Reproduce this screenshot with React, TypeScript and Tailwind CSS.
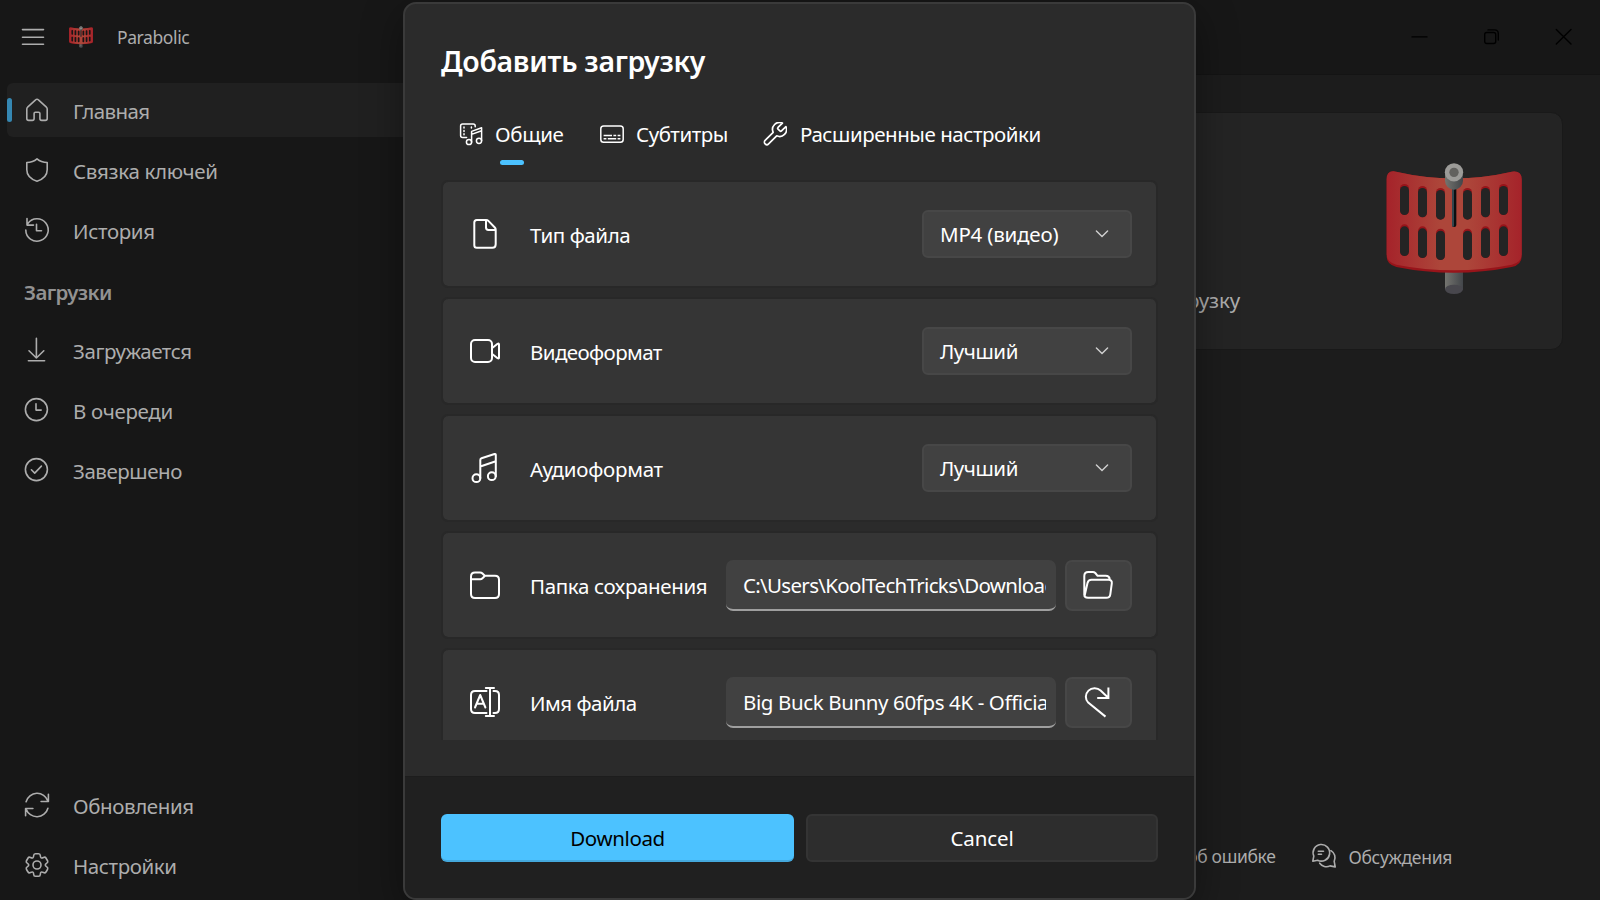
import type { ReactNode } from "react";

type IconProps = { children: ReactNode; className?: string; box?: number; stroke?: number };

function Icon({ children, className = "", box = 24, stroke = 1.6 }: IconProps) {
  return (
    <svg
      width={box}
      height={box}
      viewBox={`0 0 ${box} ${box}`}
      fill="none"
      stroke="currentColor"
      strokeWidth={stroke}
      strokeLinejoin="round"
      strokeLinecap="round"
      className={`block shrink-0 overflow-visible ${className}`}
    >
      {children}
    </svg>
  );
}

/* Six-toothed cog whose corners are smoothed with quadratic curves. */
const gearPath = (() => {
  const pts: [number, number][] = [];
  for (let i = 0; i < 6; i++) {
    for (const [da, r] of [[-24, 8.3], [-16, 11.7], [0, 11.3], [16, 11.7], [24, 8.3]]) {
      const a = ((i * 60 + da - 90) * Math.PI) / 180;
      pts.push([12 + r * Math.cos(a), 12 + r * Math.sin(a)]);
    }
  }
  const mid = (p: number[], q: number[]) => `${((p[0] + q[0]) / 2).toFixed(2)} ${((p[1] + q[1]) / 2).toFixed(2)}`;
  let d = `M${mid(pts[pts.length - 1], pts[0])}`;
  pts.forEach((p, i) => {
    d += `Q${p[0].toFixed(2)} ${p[1].toFixed(2)} ${mid(p, pts[(i + 1) % pts.length])}`;
  });
  return d + "Z";
})();

const slots = [
  [90, 102, 195], [144, 108, 202], [198, 114, 209], [279, 114, 209], [333, 108, 202], [387, 102, 195],
  [90, 223, 318], [144, 229, 324], [198, 236, 330], [279, 236, 330], [333, 229, 324], [387, 223, 318],
];

function Logo({ width, height, hole, id }: { width: number; height: number; hole: string; id: string }) {
  return (
    <svg width={width} height={height} viewBox="48 36 408 399" preserveAspectRatio="none" className="block shrink-0">
      <defs>
        <linearGradient id={`${id}-panel`} x1="0" x2="1" y1="0" y2="0">
          <stop offset="0" stopColor="#a5232a" />
          <stop offset="0.4" stopColor="#ad463a" />
          <stop offset="0.6" stopColor="#ad463a" />
          <stop offset="1" stopColor="#a5232a" />
        </linearGradient>
        <linearGradient id={`${id}-pole`} x1="0" x2="1" y1="0" y2="0">
          <stop offset="0" stopColor="#74746f" />
          <stop offset="1" stopColor="#43464a" />
        </linearGradient>
      </defs>
      <rect x="225" y="355" width="54" height="63" fill={`url(#${id}-pole)`} />
      <ellipse cx="252" cy="418" rx="27" ry="14" fill="#48474d" />
      <path d="M50 88Q50 64 70 64Q74 64 78 65Q252 105 426 65Q455 61 455 88V320Q455 344 425 351Q252 386 79 351Q50 342 50 320Z" fill="#98141a" />
      <path d="M50 88Q50 64 70 64Q74 64 78 65Q252 105 426 65Q455 61 455 88V312Q455 337 425 344Q252 378 79 344Q50 336 50 312Z" fill={`url(#${id}-panel)`} />
      {slots.map(([x, top, bottom]) => (
        <g key={`${x}-${top}`}>
          <rect x={x} y={top} width="27" height={bottom - top} rx="13.5" fill="#98141a" />
          <rect x={x} y={top + 6} width="27" height={bottom - top - 6} rx="13.5" fill={hole} />
        </g>
      ))}
      <rect x="246" y="100" width="13" height="131" rx="6" fill="#0b0f12" />
      <rect x="246" y="100" width="6" height="130" rx="3" fill="#33454d" />
      <path d="M225 67V92A27 27 0 0 0 279 92V67Z" fill={`url(#${id}-pole)`} />
      <circle cx="252" cy="67" r="27.5" fill="#9c9b98" />
      <circle cx="252" cy="67" r="14" fill="#62615e" />
    </svg>
  );
}

function NavItem({ icon, label, tracking, selected }: { icon: ReactNode; label: string; tracking: string; selected?: boolean }) {
  return (
    <div className={`relative flex h-[54px] items-center rounded-md pl-[18px] ${selected ? "bg-[#202020]" : ""}`}>
      {selected && <span className="absolute top-[15px] left-0 h-6 w-[5px] rounded-full bg-[#3587b2]" />}
      {icon}
      <span className={`ml-6 pt-0.5 text-[20.5px] leading-7 ${tracking}`}>{label}</span>
    </div>
  );
}

function SettingCard({ icon, label, tracking, children }: { icon: ReactNode; label: string; tracking: string; children: ReactNode }) {
  return (
    <div className="flex h-[108px] shrink-0 items-center rounded-[7px] border-2 border-[#282828] bg-[#353535] bg-clip-padding pr-6 pl-[27px]">
      {icon}
      <span className={`ml-[30px] pt-0.5 text-[20.5px] leading-7 whitespace-nowrap ${tracking}`}>{label}</span>
      <div className="ml-auto flex items-center gap-[9px]">{children}</div>
    </div>
  );
}

function Combo({ value, tracking }: { value: string; tracking: string }) {
  return (
    <div className="flex h-12 w-[210px] items-center justify-between rounded-md border-2 border-[#474747] bg-[#414141] pr-[22px] pl-4">
      <span className={`text-[20.5px] leading-7 ${tracking}`}>{value}</span>
      <svg width="12" height="8" viewBox="0 0 12 8" fill="none" stroke="#d0d0d0" strokeWidth="1.4" strokeLinecap="round" className="overflow-visible">
        <path d="M.4 1 6 6.6 11.6 1" />
      </svg>
    </div>
  );
}

function PathField({ value, tracking }: { value: string; tracking: string }) {
  return (
    <div className="h-[51px] w-[330px] overflow-hidden rounded-[7px] border-b-2 border-[#9f9f9f] bg-[#414141] pr-2.5 pl-[17px]">
      <div className={`h-full overflow-hidden text-[20.5px] leading-[50px] whitespace-nowrap ${tracking}`}>{value}</div>
    </div>
  );
}

function IconButton({ children }: { children: ReactNode }) {
  return (
    <div className="flex h-[51px] w-[67px] items-center justify-center rounded-[7px] border-2 border-[#474747] bg-[#414141] pr-px">{children}</div>
  );
}

export default function App() {
  return (
    <div className="relative flex h-[900px] w-[1600px] overflow-hidden bg-[#171717] font-['Noto_Sans',sans-serif] text-[#adadad]">
      <aside className="flex h-full w-[480px] flex-col pb-2">
        <header className="flex h-[74px] items-center pl-[21px]">
          <Icon stroke={1.6}>
            <path d="M1.5 4.6h21M1.5 12.2h21M1.5 19.2h21" />
          </Icon>
          <div className="mb-px ml-6">
            <Logo width={24} height={22} hole="#171717" id="mini" />
          </div>
          <span className="ml-6 text-[17.5px] leading-6 tracking-[-0.4px]">Parabolic</span>
        </header>
        <nav className="mt-[9px] flex flex-1 flex-col gap-1.5 pl-[7px]">
          <NavItem
            selected
            label="Главная"
            tracking="tracking-[-0.6px]"
            icon={
              <Icon>
                <path d="M12 1.2c-.6 0-1 .2-1.4.6L2.6 9.2c-.5.5-.8 1-.8 1.7v9.6c0 1.2.8 1.9 1.9 1.9h3.6c1.1 0 1.8-.8 1.8-1.8v-5c0-.9.5-1.3 1.3-1.3h3.2c.8 0 1.3.4 1.3 1.3v5c0 1 .7 1.8 1.8 1.8h3.6c1.1 0 1.9-.7 1.9-1.9v-9.6c0-.7-.3-1.2-.8-1.7l-8-7.4c-.4-.4-.8-.6-1.4-.6z" />
              </Icon>
            }
          />
          <NavItem
            label="Связка ключей"
            tracking="tracking-[-0.32px]"
            icon={
              <Icon>
                <path d="M12 .8c3 2.6 6.3 3.6 10.2 3.7v7.2c0 5.3-3.6 9.3-10.2 11.5C5.4 21 1.8 17 1.8 11.7V4.5C5.7 4.4 9 3.4 12 .8z" />
              </Icon>
            }
          />
          <NavItem
            label="История"
            tracking="tracking-[-0.35px]"
            icon={
              <Icon>
                <path d="M.8 12a11.2 11.2 0 1 0 2-6.4M2 .6v6.5h6.5M11.5 6.3v6.4h5" />
              </Icon>
            }
          />
          <div className="flex h-[54px] items-center pt-1 pl-[17px] text-[20.5px] leading-7 font-semibold tracking-[-0.6px] text-[#929292]">Загрузки</div>
          <NavItem
            label="Загружается"
            tracking="tracking-[-0.41px]"
            icon={
              <Icon>
                <path d="M11.4 .4v19.6M4 12.8l7.4 7.2 7.4-7.2M3.4 22.8h16.2" />
              </Icon>
            }
          />
          <NavItem
            label="В очереди"
            tracking="tracking-[-0.32px]"
            icon={
              <Icon>
                <circle cx="11.4" cy="11.6" r="11" />
                <path d="M11 5.7v6.4h5.2" />
              </Icon>
            }
          />
          <NavItem
            label="Завершено"
            tracking="tracking-[-0.45px]"
            icon={
              <Icon>
                <circle cx="11.4" cy="11.6" r="11" />
                <path d="m6.4 11.8 3.3 3.3 6.7-7" />
              </Icon>
            }
          />
        </nav>
        <div className="flex flex-col gap-1.5 pl-[7px]">
          <NavItem
            label="Обновления"
            tracking="tracking-[-0.4px]"
            icon={
              <Icon>
                <path d="M1.1 8.8A11.4 11.4 0 0 1 22.9 8M23.4 1.2v7.3h-7.3M22.9 15.2A11.4 11.4 0 0 1 1.1 16M.6 22.8v-7.3h7.3" />
              </Icon>
            }
          />
          <NavItem
            label="Настройки"
            tracking="tracking-[-0.4px]"
            icon={
              <Icon>
                <path d={gearPath} />
                <circle cx="12" cy="12" r="4" />
              </Icon>
            }
          />
        </div>
      </aside>

      <div className="flex flex-1 flex-col">
        <header className="flex h-[74px] shrink-0 items-center justify-end gap-[57px] pr-[29px] pb-0.5 text-black">
          <Icon box={15} stroke={1.4}>
            <path d="M0 7.9h15" />
          </Icon>
          <Icon box={15} stroke={1.4}>
            <rect x=".7" y="3.5" width="11" height="11" rx="2" />
            <path d="M4 .9h6.500c2.400 0 3.800 1.500 3.800 3.800V11" />
          </Icon>
          <Icon box={15} stroke={1.4}>
            <path d="M.3.4l14.700 14.700M15 .4.3 15.100" />
          </Icon>
        </header>
        <main className="flex flex-1 flex-col border-t border-[#141414] bg-[#1c1c1c] pt-[37px] pr-[37px]">
          <section className="flex h-[238px] justify-between rounded-xl border border-[#191919] bg-[#242424] pr-10">
            <div className="flex w-[759px] items-end justify-end pb-[35px] text-[20.5px] leading-7 tracking-[-0.1px] whitespace-nowrap">
              <span>Добавить загрузку</span>
            </div>
            <div className="pt-[49px]">
              <Logo width={136} height={133} hole="#242424" id="hero" />
            </div>
          </section>
          <footer className="mt-auto flex items-center gap-[37px] pr-[111px] pb-[31px] text-[17.5px] leading-6 whitespace-nowrap">
            <span className="ml-auto tracking-[-0.35px]">Сообщить об ошибке</span>
            <span className="flex items-center">
              <Icon stroke={1.6}>
                <path d="M.8 17.2l1-5A8.3 8.3 0 1 1 5.6 16.2zM6.3 7.2h5.2M6.3 10.3h3.2M19 6.6a8.3 8.3 0 0 1 3.2 10.7l1 5.6-5.2-1a8.3 8.3 0 0 1-10.3-2.7" />
              </Icon>
              <span className="ml-3 pt-0.5 tracking-[-0.3px]">Обсуждения</span>
            </span>
          </footer>
        </main>
      </div>

      <div
        role="dialog"
        className="absolute top-[2px] left-[403px] flex h-[898px] w-[793px] flex-col overflow-hidden rounded-[13px] border-2 border-[#3a3a3a] bg-[#2b2b2b] text-white shadow-[0_12px_40px_rgba(0,0,0,0.38)]"
      >
        <div className="flex h-[772px] flex-col px-9">
          <h2 className="mt-[37px] text-[28.5px] leading-10 font-semibold tracking-[-0.31px]">Добавить загрузку</h2>
          <div className="relative mt-[33px] ml-[18px] flex h-[51px] items-start text-[20.5px] leading-7">
            <div className="flex w-[141px] items-start pt-1.5">
              <Icon stroke={1.5} className="mt-0.5">
                <path d="M7.600 15.600H3.600q-2 0-2-2V4q0-2 2-2h10.600q2 0 2 2v.8M12.600 20.200V9.400l10-3.600v13M12.600 12.400l10-3.600" />
                <circle cx="10" cy="20" r="2.600" />
                <circle cx="20" cy="18.800" r="2.600" />
                <path d="M5 5v1M5 8.400v1M5 11.800v1M12.400 5v1" />
              </Icon>
              <span className="ml-3 tracking-[-0.35px]">Общие</span>
            </div>
            <div className="flex items-start pt-1.5">
              <Icon stroke={1.5} className="mt-0.5">
                <rect x=".8" y="4" width="22.400" height="16.200" rx="2.800" />
                <path strokeLinecap="butt" d="M3.600 13.600h8.400M13.400 13.600h2.800M17.600 13.600h2.800M3.600 16.800h2.800M7.800 16.800h8.400M17.600 16.800h2.800" />
              </Icon>
              <span className="ml-3 tracking-[-0.43px]">Субтитры</span>
            </div>
            <div className="ml-[35px] flex items-start pt-1.5">
              <svg width="24" height="24" viewBox="1.8 1.6 20.6 20.6" fill="none" stroke="currentColor" strokeWidth="1.45" strokeLinejoin="round" className="mt-0.5 block shrink-0">
                <path d="M14.7 6.3a1 1 0 0 0 0 1.4l1.6 1.6a1 1 0 0 0 1.4 0l3.77-3.77a6 6 0 0 1-7.94 7.94l-6.91 6.91a2.12 2.12 0 0 1-3-3l6.91-6.91a6 6 0 0 1 7.94-7.94l-3.76 3.76z" />
              </svg>
              <span className="ml-[13px] tracking-[-0.45px]">Расширенные настройки</span>
            </div>
            <span className="absolute bottom-0 left-[41px] h-[5px] w-6 rounded-full bg-[#4cc2ff]" />
          </div>
          <div className="mt-[15px] flex h-[560px] flex-col gap-[9px] overflow-hidden">
            <SettingCard
              label="Тип файла"
              tracking="tracking-[-0.4px]"
              icon={
                <Icon box={30} stroke={2}>
                  <path d="M6.800 1h9.400c.9 0 1.600.3 2.200.9l6.400 6.600c.6.6.9 1.300.9 2.200v14.600c0 2.100-1.200 3.500-3.300 3.500H6.800c-1.700 0-2.500-1-2.500-2.600V3.600C4.300 2 5.100 1 6.800 1zM16 1.300v7.200c0 1.600.8 2.400 2.400 2.400h7" />
                </Icon>
              }
            >
              <Combo value="MP4 (видео)" tracking="tracking-[-0.2px]" />
            </SettingCard>
            <SettingCard
              label="Видеоформат"
              tracking="tracking-[-0.59px]"
              icon={
                <Icon box={30} stroke={2}>
                  <rect x="1" y="4" width="21" height="22" rx="4" />
                  <path d="m22.2 12 5.4-4.200q1.400-.8 1.400.7v13q0 1.500-1.400.7L22.200 18" />
                </Icon>
              }
            >
              <Combo value="Лучший" tracking="tracking-[-0.45px]" />
            </SettingCard>
            <SettingCard
              label="Аудиоформат"
              tracking="tracking-[-0.25px]"
              icon={
                <Icon box={30} stroke={2}>
                  <circle cx="6.4" cy="25.2" r="3.9" />
                  <circle cx="21.8" cy="23.2" r="3.9" />
                  <path d="M10.300 25V7q0-1.300 1.200-1.700L24.500 1q1.300-.3 1.300 1v21.300M10.300 13.500l15.500-5.200" />
                </Icon>
              }
            >
              <Combo value="Лучший" tracking="tracking-[-0.45px]" />
            </SettingCard>
            <SettingCard
              label="Папка сохранения"
              tracking="tracking-[-0.36px]"
              icon={
                <Icon box={30} stroke={2}>
                  <path d="M1 24V6.500q0-4 4-4h5q1.500 0 2.500 1l2.300 2.300H25q4 0 4 4V24q0 4-4 4H5q-4 0-4-4zM1.200 9.200h9q1.300 0 2.300-1l2.300-2.200" />
                </Icon>
              }
            >
              <PathField value="C:\Users\KoolTechTricks\Downloads" tracking="tracking-[-0.68px]" />
              <IconButton>
                <Icon box={30} stroke={2}>
                  <path d="M1.300 25V6q0-4 4-4h4.500q1.500 0 2.500 1l2.300 2.800h8q4 0 4.200 4M1.500 26.200l3-13.200q.8-3.200 4-3.200h17q3.800 0 3.300 3.600L27.300 24.300q-.5 3.500-4 3.500H5q-3.700 0-3.700-3.500" />
                </Icon>
              </IconButton>
            </SettingCard>
            <SettingCard
              label="Имя файла"
              tracking="tracking-[-0.5px]"
              icon={
                <Icon box={30} stroke={2}>
                  <path d="M15.800 1h8.200M15.800 29h8.200M20 1v28M16.500 4H5q-4 0-4 4v14q0 4 4 4h11.500M23.500 4H25q4 0 4 4v14q0 4-4 4h-1.500M5 20.500l5.200-12.500 5.200 12.500M6.800 16.700h7" />
                </Icon>
              }
            >
              <PathField value="Big Buck Bunny 60fps 4K - Official" tracking="tracking-[-0.38px]" />
              <IconButton>
                <Icon box={30} stroke={2}>
                  <path strokeLinecap="butt" strokeLinejoin="miter" d="M25 10.600 17.600 3.600C14.500.6 9 .2 5.500 3.600 1.800 7.200 2.200 12.600 5.200 15.600L22.500 29.600M25.400.4v10.500H14.200" />
                </Icon>
              </IconButton>
            </SettingCard>
          </div>
        </div>
        <div className="flex flex-1 items-start gap-3 border-t border-[#1d1d1d] bg-[#202020] px-9 pt-[37px] text-[20.5px] leading-7">
          <button className="h-12 w-[353px] rounded-md border-b-2 border-[#44a8dc] bg-[#4cc2ff] pt-0.5 tracking-[-0.38px] text-black">Download</button>
          <button className="h-12 w-[352px] rounded-md border-2 border-[#343434] bg-[#2d2d2d] tracking-[-0.1px]">Cancel</button>
        </div>
      </div>
    </div>
  );
}
